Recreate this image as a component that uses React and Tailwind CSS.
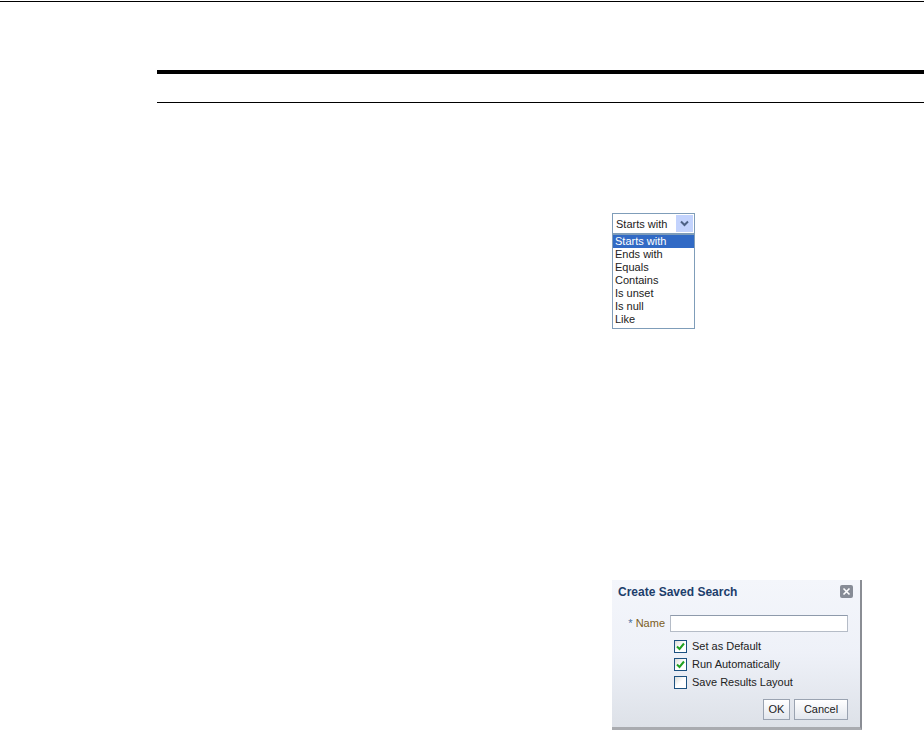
import { useState } from 'react';

const operators = ['Starts with', 'Ends with', 'Equals', 'Contains', 'Is unset', 'Is null', 'Like'];

function Check({ checked }) {
  return (
    <span className="flex h-[13px] w-[13px] items-center justify-center border border-[#1c5180] bg-gradient-to-br from-[#dcdcd7] via-white to-white">
      {checked && (
        <svg width="9" height="9" viewBox="0 0 9 9">
          <path d="M1 4.5 L3.5 7 L8 1.5" fill="none" stroke="#21a121" strokeWidth="2" />
        </svg>
      )}
    </span>
  );
}

export default function App() {
  const [selected] = useState('Starts with');
  const [checks, setChecks] = useState({ def: true, run: true, layout: false });

  const toggle = (key) => setChecks((c) => ({ ...c, [key]: !c[key] }));

  return (
    <div className="h-[737px] w-[924px] overflow-hidden bg-white font-['Liberation_Sans',Arial,sans-serif] text-[11px] text-[#1a1a1a]">
      <div className="mt-px h-px bg-black" />
      <div className="ml-[157px] mt-[68px] h-1 bg-black" />
      <div className="ml-[157px] mt-[28px] h-px bg-black" />

      {/* operator dropdown */}
      <div className="ml-[612px] mt-[110px] w-[83px]">
        <div className="flex h-[21px] items-center border border-[#7f9db9] bg-white">
          <span className="pl-[3px] pt-px text-[#222]">{selected}</span>
          <span className="ml-auto mr-px flex h-[17px] w-[17px] items-center justify-center bg-[#c3d3fd]">
            <svg width="9" height="7" viewBox="0 0 9 7">
              <path d="M1 1.5 L4.5 5 L8 1.5" fill="none" stroke="#4d6185" strokeWidth="2" />
            </svg>
          </span>
        </div>
        <div className="border border-[#7f9db9] bg-white pb-[2px]">
          {operators.map((op) => (
            <div
              key={op}
              className={`h-[13px] pl-[2px] leading-[13px] ${op === selected ? 'bg-[#316ac5] text-white' : 'text-[#222]'}`}
            >
              {op}
            </div>
          ))}
        </div>
      </div>

      {/* saved search dialog */}
      <div className="ml-[612px] mt-[251px] flex h-[150px] w-[250px] flex-col border-r-2 border-b-[3px] border-r-[#8a8d94] border-b-[#a9abb0] bg-gradient-to-b from-[#f4f6fb] via-[#eef1f8] to-[#dde1e8] px-[6px] pt-[4px]">
        <div className="flex h-[15px] items-center">
          <span className="text-[12px] font-bold text-[#1d3e6b]">Create Saved Search</span>
          <span className="ml-auto mr-[1px] flex h-[13px] w-[13px] items-center justify-center rounded-[2px] bg-[#878c96]">
            <svg width="9" height="9" viewBox="0 0 9 9">
              <path d="M1.5 1.5 L7.5 7.5 M7.5 1.5 L1.5 7.5" stroke="white" strokeWidth="1.6" />
            </svg>
          </span>
        </div>

        <div className="mt-[16px] flex h-[17px] items-center">
          <span className="w-[52px] pr-[5px] text-right">
            <span className="text-[#4b6fa0]">*</span> <span className="text-[#7b5d22]">Name</span>
          </span>
          <input className="h-[17px] w-[178px] border border-[#b5bcc7] border-t-[#8e9aab] bg-white outline-none" />
        </div>

        <div className="mt-[5px] pl-[56px]">
          {[
            ['def', 'Set as Default'],
            ['run', 'Run Automatically'],
            ['layout', 'Save Results Layout'],
          ].map(([key, label]) => (
            <label key={key} className="flex h-[18px] cursor-pointer items-center gap-[5px]" onClick={() => toggle(key)}>
              <Check checked={checks[key]} />
              <span className="text-[#222]">{label}</span>
            </label>
          ))}
        </div>

        <div className="mt-[8px] flex justify-end gap-[4px] pr-[6px]">
          <button className="h-[21px] w-[27px] border border-[#9aa3b1] bg-gradient-to-b from-white to-[#e3e7ee] text-[11px] text-[#1a1a1a]">OK</button>
          <button className="h-[21px] w-[54px] border border-[#9aa3b1] bg-gradient-to-b from-white to-[#e3e7ee] text-[11px] text-[#1a1a1a]">Cancel</button>
        </div>
      </div>
    </div>
  );
}
